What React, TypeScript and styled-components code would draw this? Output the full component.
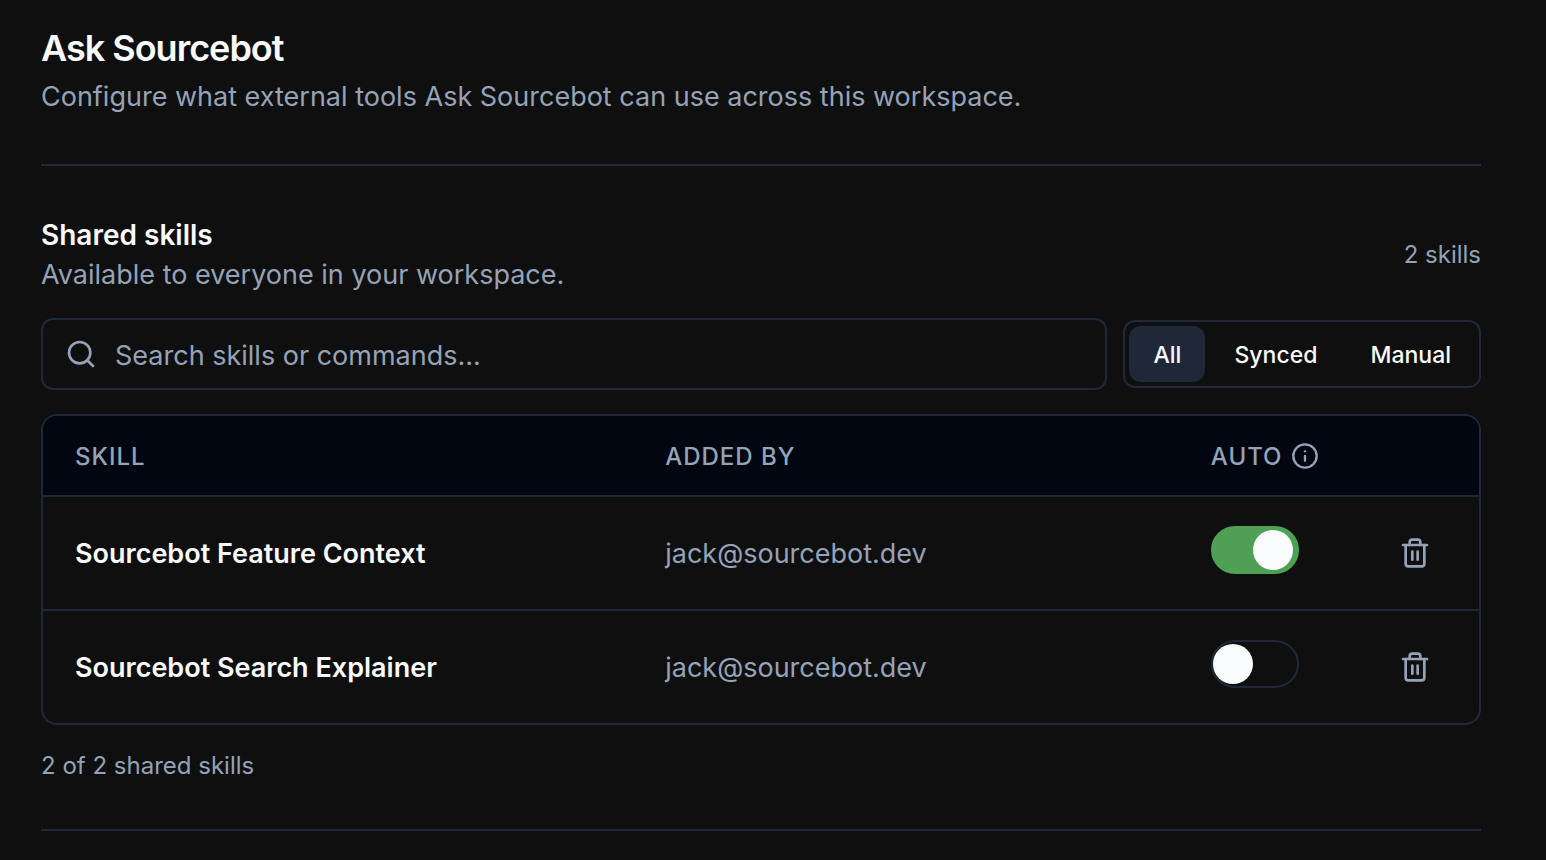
import React, { useState } from "react";
import styled, { createGlobalStyle } from "styled-components";
import { Info, Search, Trash2 } from "lucide-react";

const colors = {
  background: "#0f0f0f",
  header: "#020611",
  border: "#1e293b",
  accent: "#1f2839",
  text: "#f8fafc",
  muted: "#94a3b8",
  green: "#4ea154",
};

const GlobalStyle = createGlobalStyle`
  *, *::before, *::after { box-sizing: border-box; }
  body {
    margin: 0;
    background: ${colors.background};
    color: ${colors.text};
    font-family: Inter, "Liberation Sans", sans-serif;
    -webkit-font-smoothing: antialiased;
  }
  h1, h2, p { margin: 0; }
  button, input { font: inherit; color: inherit; }
`;

const Page = styled.main`
  padding: 28px 65px 28px 41px;
`;

const PageHeader = styled.header`
  padding-bottom: 46px;
  border-bottom: 2px solid ${colors.border};
`;

const Title = styled.h1`
  font-size: 36px;
  font-weight: 600;
  line-height: 40px;
  letter-spacing: -1px;
`;

const Description = styled.p`
  margin-top: 8px;
  font-size: 27px;
  line-height: 42px;
  color: ${colors.muted};
`;

const Section = styled.section`
  padding: 49px 0 47px;
  border-bottom: 2px solid ${colors.border};
`;

const SectionHeader = styled.div`
  display: flex;
  align-items: center;
  justify-content: space-between;
  margin-bottom: 23px;
`;

const SectionTitle = styled.h2`
  font-size: 28px;
  font-weight: 600;
  line-height: 40px;
`;

const SectionText = styled.p`
  font-size: 27px;
  line-height: 40px;
  color: ${colors.muted};
`;

const Note = styled.p`
  font-size: 24px;
  line-height: 32px;
  color: ${colors.muted};
`;

const Toolbar = styled.div`
  display: flex;
  align-items: center;
  gap: 16px;
  margin-bottom: 24px;
`;

const SearchBox = styled.label`
  display: flex;
  flex: 1;
  align-items: center;
  gap: 18px;
  height: 72px;
  padding: 0 22px;
  border: 2px solid ${colors.border};
  border-radius: 12px;
  color: ${colors.muted};
`;

const SearchInput = styled.input`
  flex: 1;
  min-width: 0;
  padding: 4px 0 0;
  border: 0;
  outline: 0;
  background: transparent;
  font-size: 27px;
  line-height: 40px;
  color: ${colors.text};

  &::placeholder {
    color: ${colors.muted};
    opacity: 1;
  }
`;

const Filters = styled.div`
  display: flex;
  gap: 5px;
  padding: 4px;
  border: 2px solid ${colors.border};
  border-radius: 12px;
`;

const FilterButton = styled.button<{ $active: boolean }>`
  height: 56px;
  min-width: 76px;
  padding: 2px 24px 0;
  border: 0;
  border-radius: 12px;
  background: ${(p) => (p.$active ? colors.accent : "transparent")};
  font-size: 23px;
  font-weight: 500;
  line-height: 32px;
  cursor: pointer;
`;

const TableFrame = styled.div`
  overflow: hidden;
  margin-bottom: 25px;
  border: 2px solid ${colors.border};
  border-radius: 16px;
`;

const Table = styled.table`
  width: 100%;
  table-layout: fixed;
  border-collapse: separate;
  border-spacing: 0;
`;

const HeadCell = styled.th<{ $width?: string }>`
  width: ${(p) => p.$width ?? "auto"};
  height: 81px;
  padding: 2px 0 0 32px;
  border-bottom: 2px solid ${colors.border};
  background: ${colors.header};
  font-size: 24px;
  font-weight: 500;
  line-height: 32px;
  letter-spacing: 1px;
  text-align: left;
  color: ${colors.muted};
`;

const HeadLabel = styled.span`
  display: flex;
  align-items: center;
  gap: 8px;

  svg {
    margin-bottom: 2px;
  }
`;

const Row = styled.tr`
  &:not(:last-child) > td {
    height: 114px;
    border-bottom: 2px solid ${colors.border};
  }
`;

const Cell = styled.td<{ $muted?: boolean }>`
  height: 112px;
  padding: 2px 0 0 32px;
  font-size: 27px;
  font-weight: ${(p) => (p.$muted ? 400 : 600)};
  line-height: 40px;
  color: ${(p) => (p.$muted ? colors.muted : colors.text)};
`;

const ActionCell = styled(Cell)`
  padding: 0 40px 0 0;
  text-align: right;
`;

const Switch = styled.input`
  display: block;
  appearance: none;
  width: 88px;
  height: 48px;
  margin: 0 0 8px;
  padding: 2px 0;
  border: 2px solid ${colors.border};
  border-radius: 24px;
  background: ${colors.background};
  cursor: pointer;

  &::before {
    content: "";
    display: block;
    width: 40px;
    height: 40px;
    border-radius: 50%;
    background: ${colors.text};
  }

  &:checked {
    border-color: ${colors.green};
    background: ${colors.green};
  }

  &:checked::before {
    margin-left: 40px;
  }
`;

const IconButton = styled.button`
  display: inline-flex;
  align-items: center;
  justify-content: center;
  width: 48px;
  height: 48px;
  padding: 0;
  border: 0;
  background: transparent;
  color: ${colors.muted};
  vertical-align: middle;
  cursor: pointer;
`;

type Kind = "All" | "Synced" | "Manual";

const filters: Kind[] = ["All", "Synced", "Manual"];

const initialSkills = [
  { name: "Sourcebot Feature Context", addedBy: "jack@sourcebot.dev", auto: true },
  { name: "Sourcebot Search Explainer", addedBy: "jack@sourcebot.dev", auto: false },
];

export default function App() {
  const [skills, setSkills] = useState(initialSkills);
  const [filter, setFilter] = useState<Kind>("All");
  const [query, setQuery] = useState("");

  const visible = skills.filter((s) => s.name.toLowerCase().includes(query.toLowerCase()));

  const toggle = (name: string) =>
    setSkills(skills.map((s) => (s.name === name ? { ...s, auto: !s.auto } : s)));

  const remove = (name: string) => setSkills(skills.filter((s) => s.name !== name));

  return (
    <>
      <GlobalStyle />
      <Page>
        <PageHeader>
          <Title>Ask Sourcebot</Title>
          <Description>
            Configure what external tools Ask Sourcebot can use across this workspace.
          </Description>
        </PageHeader>

        <Section>
          <SectionHeader>
            <div>
              <SectionTitle>Shared skills</SectionTitle>
              <SectionText>Available to everyone in your workspace.</SectionText>
            </div>
            <Note>{skills.length} skills</Note>
          </SectionHeader>

          <Toolbar>
            <SearchBox>
              <Search size={32} strokeWidth={2} aria-hidden />
              <SearchInput
                type="text"
                aria-label="Search skills or commands"
                placeholder="Search skills or commands..."
                value={query}
                onChange={(e) => setQuery(e.target.value)}
              />
            </SearchBox>
            <Filters>
              {filters.map((f) => (
                <FilterButton
                  key={f}
                  type="button"
                  $active={f === filter}
                  aria-pressed={f === filter}
                  onClick={() => setFilter(f)}
                >
                  {f}
                </FilterButton>
              ))}
            </Filters>
          </Toolbar>

          <TableFrame>
            <Table>
              <thead>
                <tr>
                  <HeadCell $width="41.1%">SKILL</HeadCell>
                  <HeadCell $width="38%">ADDED BY</HeadCell>
                  <HeadCell>
                    <HeadLabel>
                      AUTO
                      <Info size={28} strokeWidth={2} aria-hidden />
                    </HeadLabel>
                  </HeadCell>
                  <HeadCell $width="120px" aria-label="Actions" />
                </tr>
              </thead>
              <tbody>
                {visible.map((s) => (
                  <Row key={s.name}>
                    <Cell>{s.name}</Cell>
                    <Cell $muted>{s.addedBy}</Cell>
                    <Cell>
                      <Switch
                        type="checkbox"
                        role="switch"
                        aria-label={`Auto: ${s.name}`}
                        checked={s.auto}
                        onChange={() => toggle(s.name)}
                      />
                    </Cell>
                    <ActionCell>
                      <IconButton
                        type="button"
                        aria-label={`Delete ${s.name}`}
                        onClick={() => remove(s.name)}
                      >
                        <Trash2 size={32} strokeWidth={2} aria-hidden />
                      </IconButton>
                    </ActionCell>
                  </Row>
                ))}
              </tbody>
            </Table>
          </TableFrame>

          <Note>
            {visible.length} of {skills.length} shared skills
          </Note>
        </Section>
      </Page>
    </>
  );
}
